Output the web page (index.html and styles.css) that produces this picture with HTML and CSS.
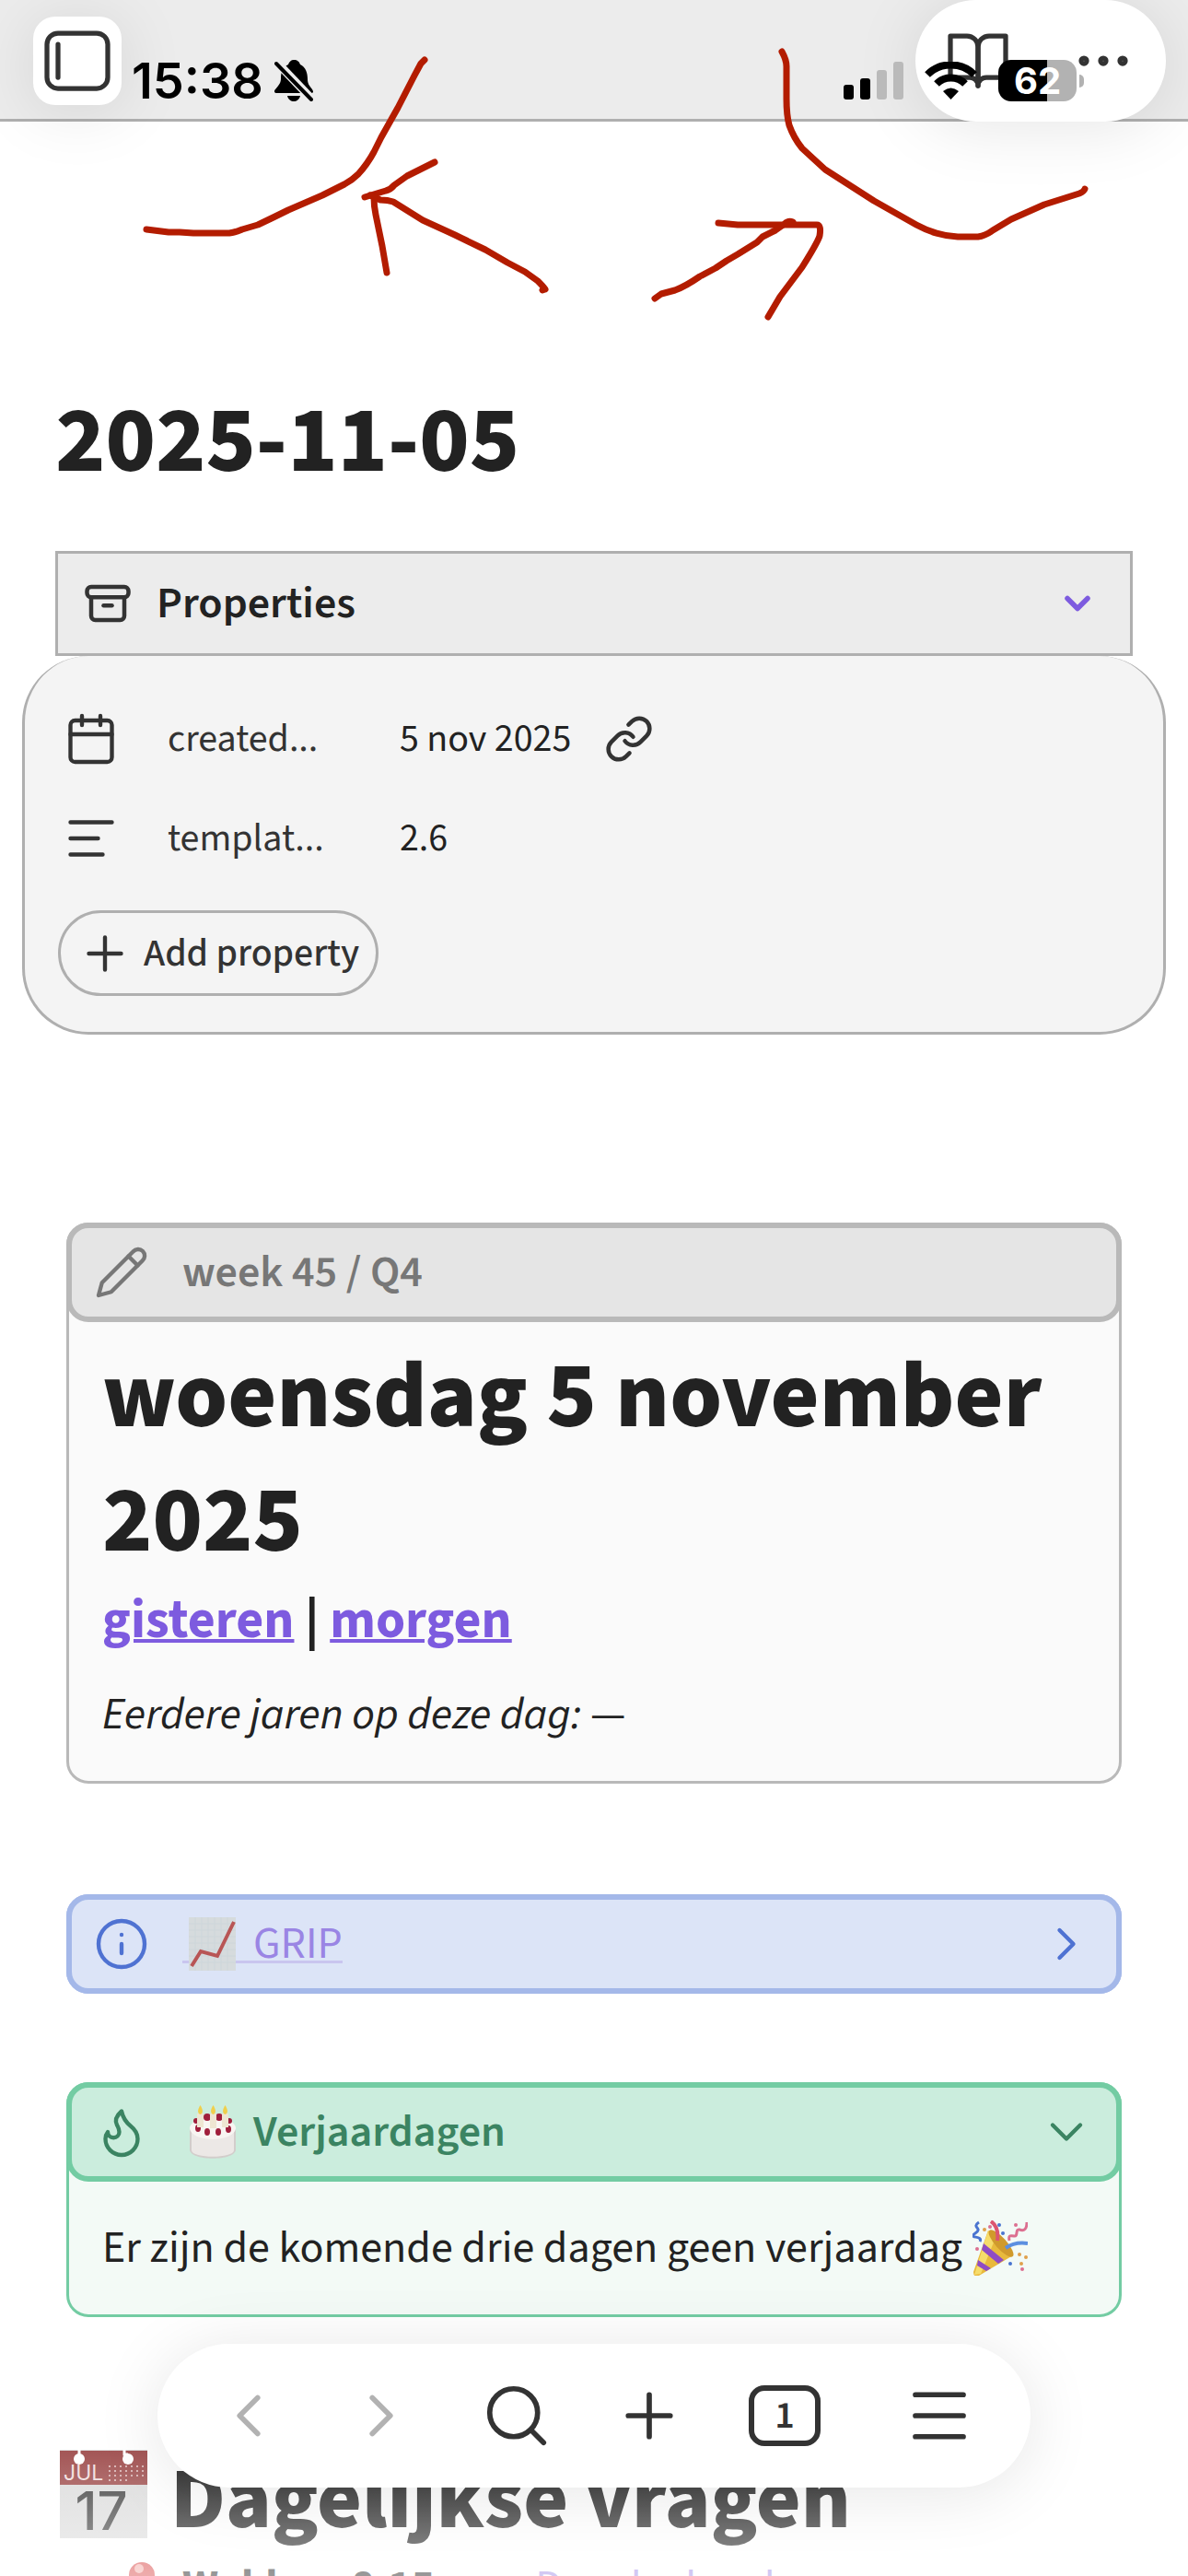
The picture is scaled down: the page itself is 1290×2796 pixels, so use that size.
FILE: index.html
```html
<!DOCTYPE html>
<html lang="nl">
<head>
<meta charset="utf-8">
<meta name="viewport" content="width=device-width, initial-scale=1">
<title>2025-11-05</title>
<link rel="stylesheet" href="styles.css">
</head>
<body>
<div class="app">
  <header class="topbar">
    <button class="float sidebar-button" aria-label="Sidebar">
      <svg class="icon icon-72" viewBox="0 0 24 24"><rect x="1" y="2" width="22" height="20" rx="4"/><path d="M5 6v12"/></svg>
    </button>
    <div class="float view-actions">
      <button class="plain" aria-label="Leesweergave">
        <svg class="icon icon-72" viewBox="0 0 24 24"><path d="M2 3h6a4 4 0 0 1 4 4v14a3 3 0 0 0-3-3H2z"/><path d="M22 3h-6a4 4 0 0 0-4 4v14a3 3 0 0 1 3-3h7z"/></svg>
      </button>
      <button class="plain" aria-label="Meer opties">
        <svg class="icon icon-72" viewBox="0 0 24 24"><circle cx="5" cy="12" r="1"/><circle cx="12" cy="12" r="1"/><circle cx="19" cy="12" r="1"/></svg>
      </button>
    </div>
    <div class="status">
      <div class="status-time">
        <span>15:38</span>
        <svg width="43" height="46" viewBox="0 0 43 46">
          <path d="M21 0c4 0 6 2 7 5 6 3 8 9 8 16 0 5 2 7 5 11 2 3 1 4-2 4H3c-3 0-4-2-2-4 4-5 6-7 6-12 0-7 2-12 8-15 1-3 3-5 6-5z"/>
          <path d="M14 39h14c-1 4-4 6-7 6s-6-2-7-6z"/>
          <path class="bell-gap" d="M2 2l40 42"/>
          <path class="bell-slash" d="M2 4l38 39"/>
        </svg>
      </div>
      <div class="status-signals">
        <svg width="65" height="41" viewBox="0 0 65 41"><rect y="25" width="11" height="16" rx="3"/><rect x="18" y="18" width="11" height="23" rx="3"/><rect class="dim" x="36" y="9" width="11" height="32" rx="3"/><rect class="dim" x="54" width="11" height="41" rx="3"/></svg>
        <svg width="57" height="41" viewBox="0 0 57 41"><path class="wave" d="M3 14a36 36 0 0 1 51 0"/><path class="wave" d="M13 24a22 22 0 0 1 31 0"/><path d="M28.500 41l-8.500-9q8.500-7 17 0z"/></svg>
        <div class="battery"><span>62</span></div>
      </div>
    </div>
  </header>

  <main class="note">
    <h1 class="title">2025-11-05</h1>

    <section class="properties">
      <div class="properties-head">
        <svg class="icon icon-54" viewBox="0 0 24 24"><rect x="2" y="4" width="20" height="5" rx="2"/><path d="M4 9v9a2 2 0 0 0 2 2h12a2 2 0 0 0 2-2V9"/><path d="M10 13h4"/></svg>
        <h2 class="label">Properties</h2>
        <button class="plain fold accent" aria-label="Inklappen"><svg class="icon icon-44" viewBox="0 0 24 24"><path d="M6 9l6 6 6-6"/></svg></button>
      </div>
      <div class="properties-body">
        <div class="property">
          <svg class="icon icon-60" viewBox="0 0 24 24"><rect x="3" y="4" width="18" height="18" rx="2"/><path d="M16 2v4M8 2v4M3 10h18"/></svg>
          <span class="property-name">created...</span>
          <span class="property-value">5 nov 2025</span>
          <svg class="icon icon-54" viewBox="0 0 24 24"><path d="M10 13a5 5 0 0 0 7.540.540l3-3a5 5 0 0 0-7.070-7.070l-1.720 1.710"/><path d="M14 11a5 5 0 0 0-7.540-.540l-3 3a5 5 0 0 0 7.070 7.070l1.710-1.710"/></svg>
        </div>
        <div class="property">
          <svg class="icon icon-60" viewBox="0 0 24 24"><path d="M3 5h18M3 12h12M3 19h14"/></svg>
          <span class="property-name">templat...</span>
          <span class="property-value">2.6</span>
        </div>
        <button class="add-property">
          <svg class="icon icon-60" viewBox="0 0 24 24"><path d="M5 12h14M12 5v14"/></svg>
          <span>Add property</span>
        </button>
      </div>
    </section>

    <section class="callout gray">
      <div class="callout-head">
        <svg class="icon icon-60" viewBox="0 0 24 24"><path d="M17 3a2.850 2.830 0 1 1 4 4L7.500 20.500 2 22l1.500-5.500Z"/><path d="M15 5l4 4"/></svg>
        <h2 class="label">week 45 / Q4</h2>
      </div>
      <div class="callout-body day">
        <h1 class="title">woensdag 5 november 2025</h1>
        <p class="day-links"><a href="#gisteren">gisteren</a> | <a href="#morgen">morgen</a></p>
        <p class="text"><em>Eerdere jaren op deze dag:</em> —</p>
      </div>
    </section>

    <section class="callout blue">
      <div class="callout-head">
        <svg class="icon icon-60" viewBox="0 0 24 24"><circle cx="12" cy="12" r="10"/><path d="M12 16v-4M12 8h.01"/></svg>
        <a class="label grip" href="#grip">
          <svg class="emoji" viewBox="0 0 60 60">
            <rect x="7" y="1" width="51" height="58" fill="#d6dbdd"/>
            <path d="M7 8h51M7 15h51M7 22h51M7 29h51M7 36h51M7 43h51M7 50h51M14 1v58M21 1v58M28 1v58M35 1v58M42 1v58M49 1v58" stroke="#cdd6da" stroke-width="1"/>
            <path d="M10 54l10-16 18 5L56 6" fill="none" stroke="#b85555" stroke-width="4"/>
          </svg><span>GRIP</span>
        </a>
        <button class="plain fold" aria-label="Uitklappen"><svg class="icon icon-60" viewBox="0 0 24 24"><path d="M9 18l6-6-6-6"/></svg></button>
      </div>
    </section>

    <section class="callout green">
      <div class="callout-head">
        <svg class="icon icon-60" viewBox="0 0 24 24"><path d="M8.500 14.500A2.500 2.500 0 0 0 11 12c0-1.380-.500-2-1-3-1.072-2.143-.224-4.054 2-6 .500 2.500 2 4.900 4 6.500 2 1.600 3 3.500 3 5.500a7 7 0 1 1-14 0c0-1.153.433-2.294 1-3a2.500 2.500 0 0 0 2.500 2.500z"/></svg>
        <h2 class="label with-emoji">
          <svg class="emoji" viewBox="0 0 60 60">
            <path d="M8 27v22c0 13 50 13 50 0V27z" fill="#d2cdcb"/>
            <path d="M10 29v21c0 9 46 9 46 0V29z" fill="#ece8e6"/>
            <ellipse cx="33" cy="26" rx="25" ry="12" fill="#f8f5f2"/>
            <g fill="#a01f3c"><circle cx="15" cy="18" r="3"/><circle cx="27" cy="14" r="4"/><circle cx="40" cy="14" r="4"/><circle cx="51" cy="18" r="3"/><ellipse cx="17" cy="26" rx="3" ry="4"/><ellipse cx="27" cy="30" rx="3" ry="4"/><ellipse cx="39" cy="30" rx="3" ry="4"/><ellipse cx="50" cy="27" rx="3" ry="4"/></g>
            <path d="M16 10h7v15h-7zM30 10h7v16h-7zM43 10h7v15h-7z" fill="#eee6d2"/>
            <path d="M19.500 1q5 8 0 10q-5-2 0-10zM33.500 1q5 8 0 10q-5-2 0-10zM46.500 1q5 8 0 10q-5-2 0-10z" fill="#f0cf4b"/>
          </svg><span>Verjaardagen</span>
        </h2>
        <button class="plain fold" aria-label="Inklappen"><svg class="icon icon-60" viewBox="0 0 24 24"><path d="M6 9l6 6 6-6"/></svg></button>
      </div>
      <div class="callout-body">
        <p class="text party"><span>Er zijn de komende drie dagen geen verjaardag</span>
          <svg class="emoji" viewBox="0 0 60 60">
            <path d="M17 11L44 38 7 60q-6 2-6-4z" fill="#e8b93c"/>
            <path d="M17 11l8 8L9 58l-7 1z" fill="#f6dc6b"/>
            <path d="M12 25l22 18-6 4L10 32zM6 43l14 9-5 3-10-6z" fill="#8f4bc4"/>
            <ellipse cx="31" cy="25" rx="6" ry="19" transform="rotate(-42 31 25)" fill="#d09a2c"/>
            <path d="M7 2C-2 8 12 8 3 14s9 2 5 9" fill="none" stroke="#4a74d0" stroke-width="3"/>
            <path d="M20 1q9 6 7 21" fill="none" stroke="#dc5570" stroke-width="4"/>
            <path d="M59 2q0 11-8 8c-5-1-1 8-6 7s-6 0-5 5" fill="none" stroke="#dc6f90" stroke-width="3"/>
            <path d="M36 30q10-7 24-5" fill="none" stroke="#5c8fe0" stroke-width="4"/>
            <g fill="#4a74d0"><circle cx="29" cy="5" r="2"/><circle cx="33" cy="14" r="2"/><circle cx="41" cy="47" r="2"/></g>
            <g fill="#e0a04c"><circle cx="58" cy="40" r="2"/><circle cx="53" cy="47" r="2"/><circle cx="51" cy="37" r="2"/><circle cx="13" cy="10" r="2"/></g>
            <g fill="#dc6f90"><circle cx="47" cy="5" r="2"/><circle cx="5" cy="31" r="2"/><circle cx="54" cy="53" r="2"/><circle cx="19" cy="7" r="2"/></g>
          </svg></p>
      </div>
    </section>

    <h1 class="title section-title">
      <svg width="105" height="96" viewBox="0 0 105 96" role="img">
        <rect x="5" width="95" height="96" fill="#dcdcdc"/>
        <path d="M5 1h95v37H5z" fill="#a05050"/>
        <circle cx="26" cy="10" r="6" fill="#fff"/><circle cx="79" cy="10" r="6" fill="#fff"/>
        <path d="M26 0v8M75 0v5h4" stroke="#fff" stroke-width="3" fill="none"/>
        <path d="M58 18h38M58 23h38M58 28h38M58 33h20" stroke="#d7b0b0" stroke-width="2" stroke-dasharray="2 4"/>
        <text class="cal-month" x="9" y="33">JUL</text>
        <text class="cal-day" x="50" y="87">17</text>
      </svg><span>Dagelijkse vragen</span>
    </h1>
    <p class="text entry">
      <svg width="36" height="60" viewBox="0 0 36 60"><path d="M18 28v32" stroke="#999" stroke-width="4"/><circle cx="18" cy="17" r="14" fill="#d94a4a"/><circle cx="15" cy="10" r="5" fill="#f3aaa6"/></svg>
      <b>Wekker: 8:15 uur</b> <a href="#douche">Douche hoe lang</a>
    </p>
  </main>

  <div class="fade"></div>

  <nav class="float navbar">
    <button class="plain muted" aria-label="Terug"><svg class="icon icon-78" viewBox="0 0 24 24"><path d="M15 18l-6-6 6-6"/></svg></button>
    <button class="plain muted" aria-label="Vooruit"><svg class="icon icon-78" viewBox="0 0 24 24"><path d="M9 18l6-6-6-6"/></svg></button>
    <button class="plain" aria-label="Zoeken"><svg class="icon icon-78" viewBox="0 0 24 24"><circle cx="11" cy="11" r="8"/><path d="M21 21l-4.300-4.300"/></svg></button>
    <button class="plain" aria-label="Nieuw"><svg class="icon icon-78" viewBox="0 0 24 24"><path d="M5 12h14M12 5v14"/></svg></button>
    <button class="plain" aria-label="Tabbladen"><span class="tab-count">1</span></button>
    <button class="plain" aria-label="Menu"><svg class="icon icon-78" viewBox="0 0 24 24"><path d="M4 5h16M4 12h16M4 19h16"/></svg></button>
  </nav>

  <!-- Hand-drawn marks over the page -->
  <svg class="ink" width="1290" height="360" viewBox="0 0 1290 360">
    <path d="M159 249L183 252 195 252 210 253H249Q256 252 263 249L280 244Q297 236 313 228L350 212 374 200Q383 195 389 189Q399 178 406 165L414 149 432 117 450 82 457 69 461 65"/>
    <path d="M472 176L442 191 428 201Q424 206 419 207L409 210 396 214"/>
    <path d="M402 212L413 217Q421 217 427 219L459 239 494 255 527 271 551 285 570 295 584 305Q590 311 592 314L589 315"/>
    <path d="M406 214Q406 224 408 233L415 267 420 296"/>
    <path d="M849 56Q854 65 854 72V107Q854 125 857 136Q862 150 871 161L884 173 896 184 949 218 995 244Q1017 256 1040 257H1062Q1070 256 1078 250L1098 238Q1116 230 1134 222L1172 210Q1177 208 1178 205"/>
    <path d="M780 242L801 244H887Q892 244 890 256Q888 263 871 290L847 322 834 344"/>
    <path d="M861 241Q856 239 852 243L842 250 828 257 822 263 801 276 789 283 777 291 760 300Q744 311 733 315L718 319 711 324"/>
  </svg>
</div>
</body>
</html>
```
FILE: styles.css
```css
* {
  box-sizing: border-box;
  margin: 0;
}

body {
  background: #fff;
  color: #222;
  font-family: "Source Sans 3", "Noto Sans CJK SC", "Noto Sans", sans-serif;
  font-size: 48px;
  line-height: 60px;
}

button {
  font: inherit;
  color: inherit;
  border: 0;
  background: none;
  padding: 0;
}

svg {
  display: block;
  flex: none;
}

.app {
  position: relative;
  height: 100vh;
  overflow: hidden;
}

.icon {
  fill: none;
  stroke: currentColor;
  stroke-width: 1.75;
  stroke-linecap: round;
  stroke-linejoin: round;
}

.icon-44 { width: 44px; height: 44px; stroke-width: 3; }
.icon-54 { width: 54px; height: 54px; stroke-width: 2; }
.icon-60 { width: 60px; height: 60px; }
.icon-72 { width: 72px; height: 72px; }
.icon-78 { width: 78px; height: 78px; }

.plain {
  display: flex;
  align-items: center;
  justify-content: center;
}

.float {
  background: #fff;
  color: #333;
  box-shadow: 0 6px 72px rgba(0, 0, 0, 0.1);
}

/* Top bar and phone status */

.topbar {
  position: relative;
  z-index: 1;
  display: flex;
  align-items: center;
  justify-content: space-between;
  height: 132px;
  padding: 0 24px 0 36px;
  background: #ececec;
  box-shadow: inset 0 -3px #afafaf;
}

.sidebar-button {
  display: flex;
  align-items: center;
  justify-content: center;
  width: 96px;
  height: 96px;
  border-radius: 24px;
}

.view-actions {
  display: grid;
  grid-template-columns: 1fr 1fr;
  width: 272px;
  height: 132px;
  border-radius: 66px;
}

.status {
  position: absolute;
  inset: 0;
  display: flex;
  align-items: center;
  justify-content: space-between;
  padding: 43px 113px 0 143px;
  color: #000;
  font-family: Inter, "Liberation Sans", sans-serif;
  pointer-events: none;
}

.status-time,
.status-signals {
  display: flex;
  align-items: center;
  gap: 12px;
  font-size: 54px;
  font-weight: 600;
}

.status-signals { gap: 23px; }

.bell-gap { stroke: #ececec; stroke-width: 9; }
.bell-slash { stroke: #000; stroke-width: 4; stroke-linecap: round; }
.dim { fill: #bababa; }
.wave { fill: none; stroke: #000; stroke-width: 8; }

.battery {
  display: flex;
  align-items: center;
  width: 93px;
}

.battery span {
  flex: 1;
  height: 45px;
  border-radius: 14px;
  background: linear-gradient(to right, #000 62%, #b2b2b2 62%);
  color: #fff;
  font-size: 40px;
  font-weight: 700;
  line-height: 45px;
  text-align: center;
}

.battery::after {
  content: "";
  width: 5px;
  height: 14px;
  margin-left: 3px;
  border-radius: 0 5px 5px 0;
  background: #b2b2b2;
}

/* Note */

.note {
  padding: 293px 60px 0;
}

.title {
  font-size: 102px;
  font-weight: 800;
  line-height: 110px;
}

.label {
  flex: 1;
  font-size: 48px;
  font-weight: 600;
}

.properties {
  margin-top: 63px;
}

.properties-head {
  display: flex;
  align-items: center;
  gap: 26px;
  height: 114px;
  padding: 0 35px 0 27px;
  border: 3px solid #afafaf;
  background: #ececec;
}

.properties-head .icon { color: #333; }
.properties-head .accent .icon { color: #7d5bdf; }

.properties-body {
  margin: 0 -36px;
  padding: 36px 36px 39px;
  border: 3px solid #afafaf;
  border-top: 0;
  border-radius: 72px;
  background: #f4f4f4;
  color: #333;
  font-size: 42px;
}

.property {
  display: flex;
  align-items: center;
  height: 108px;
  padding-left: 6px;
}

.property-name {
  width: 252px;
  margin-left: 53px;
}

.property-value {
  margin-right: 36px;
  color: #222;
}

.add-property {
  display: flex;
  align-items: center;
  gap: 12px;
  height: 93px;
  margin-top: 24px;
  padding: 0 18px;
  border: 3px solid #afafaf;
  border-radius: 47px;
  font-weight: 500;
}

.callout {
  margin: 120px 12px 0;
  border: 3px solid var(--line);
  border-radius: 24px;
  background: var(--paper);
}

.callout-head {
  display: flex;
  align-items: center;
  gap: 36px;
  height: 108px;
  margin: -3px;
  padding: 0 24px;
  border: 6px solid var(--line);
  border-radius: 24px;
  background: var(--fill);
  color: var(--ink);
}

.callout-body { padding: 45px 36px 42px; }

.gray { --line: #b9b9b9; --fill: #e5e5e5; --ink: #777; --paper: #fafafa; margin-top: 204px; }
.blue { --line: #a4b8e9; --fill: #dce4f7; --ink: #4f72d2; --paper: #dce4f7; }
.green { --line: #73cca3; --fill: #cbeddd; --ink: #3b8462; --paper: #f3faf6; margin-top: 96px; }

.day { padding-top: 17px; }
.day .title { line-height: 135px; }

.day-links {
  margin: 4px 0 36px;
  font-size: 58px;
  font-weight: 700;
  line-height: 72px;
}

.day-links a {
  color: #7d5bdf;
  text-decoration-thickness: 4px;
}

.with-emoji,
.party,
.grip {
  display: flex;
  align-items: center;
  gap: 17px;
}

.party { gap: 11px; }

.emoji { width: 60px; height: 60px; }

.grip {
  flex: none;
  margin-right: auto;
  background: linear-gradient(#c9c5ef, #c9c5ef) 0 48px / 100% 3px no-repeat;
  color: #9a85e4;
  font-weight: 400;
  text-decoration: none;
}

.section-title {
  display: flex;
  align-items: flex-start;
  gap: 20px;
  margin-top: 144px;
  font-size: 94px;
}

.cal-month,
.cal-day {
  font-family: Inter, "Liberation Sans", sans-serif;
  font-size: 23px;
  font-weight: 400;
  fill: #f0dede;
}

.cal-day {
  font-size: 58px;
  font-weight: 500;
  text-anchor: middle;
  fill: #444;
}

.entry {
  display: flex;
  gap: 26px;
  margin-top: 9px;
  padding-left: 76px;
  white-space: nowrap;
}

.entry a {
  color: #a08ce6;
  text-decoration: none;
}

/* Bottom bar */

.fade {
  position: absolute;
  right: 0;
  bottom: 0;
  left: 0;
  height: 145px;
  background: linear-gradient(rgba(255, 255, 255, 0), rgba(255, 255, 255, 0.540));
}

.navbar {
  position: absolute;
  right: 171px;
  bottom: 96px;
  left: 171px;
  display: grid;
  grid-template-columns: 144fr 144fr 150fr 138fr 156fr 180fr;
  height: 156px;
  padding: 0 9px 0 27px;
  border-radius: 78px;
}

.muted { color: #b2b2b2; }

.tab-count {
  width: 78px;
  height: 66px;
  border: 6px solid #333;
  border-radius: 17px;
  font-size: 42px;
  font-weight: 600;
  line-height: 54px;
}

.ink {
  position: absolute;
  top: 0;
  left: 0;
  z-index: 2;
  fill: none;
  stroke: #b31c00;
  stroke-width: 7;
  stroke-linecap: round;
  stroke-linejoin: round;
  pointer-events: none;
}
```
